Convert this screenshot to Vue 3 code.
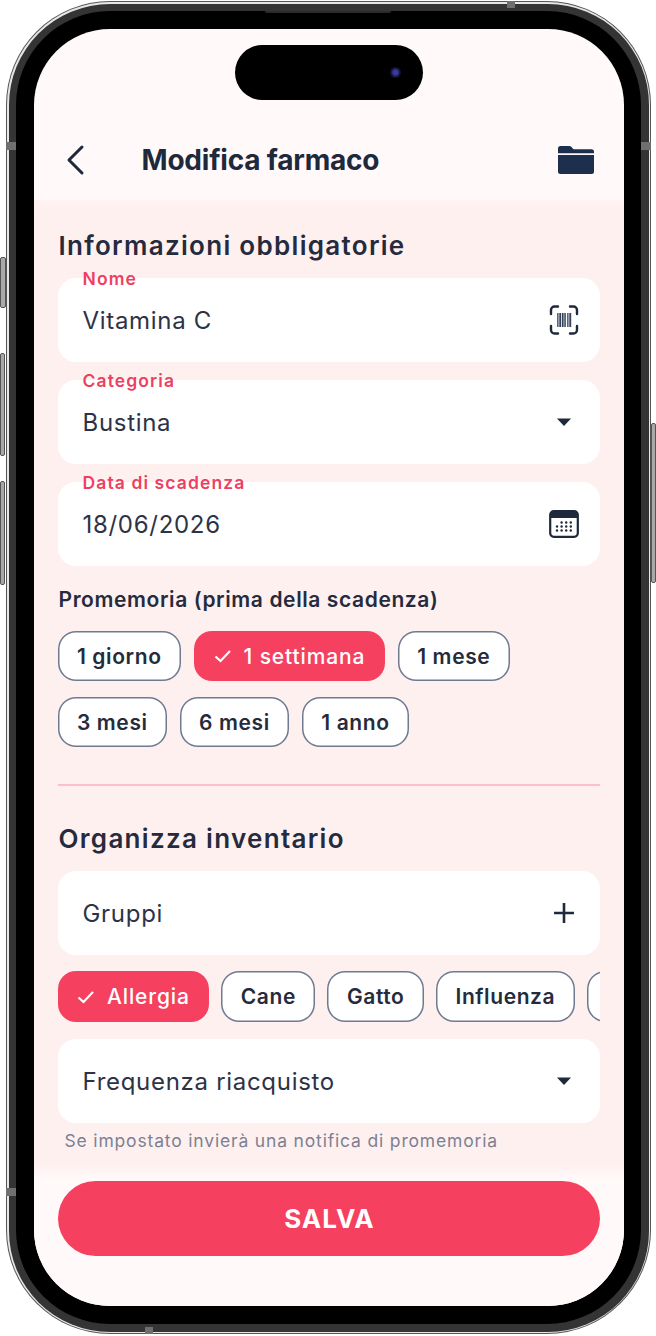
<script setup>
const reminders = [
  [{ t: '1 giorno' }, { t: '1 settimana', on: true }, { t: '1 mese' }],
  [{ t: '3 mesi' }, { t: '6 mesi' }, { t: '1 anno' }],
]
const groups = [{ t: 'Allergia', on: true }, { t: 'Cane' }, { t: 'Gatto' }, { t: 'Influenza' }]
const bars = [0, 1.5, 3, 5, 6.5, 8, 10, 11.5, 13]
const dots = []
for (let y = 0; y < 3; y++) for (let x = 0; x < 4; x++) if (!(y === 0 && x === 0)) dots.push([8 + x * 4.6, 13.5 + y * 4])
</script>

<template>
  <div class="stage">
    <div class="phone">
      <i class="btn b1"></i><i class="btn b2"></i><i class="btn b3"></i><i class="btn b4"></i>
      <i class="band bl1"></i><i class="band bl2"></i><i class="band br1"></i><i class="band bt"></i><i class="band bb"></i>
      <div class="rim">
        <div class="steel">
          <div class="metal">
            <div class="bezel">
              <div class="speaker"></div>
              <div class="screen">
                <div class="island"><span class="camera"></span></div>
                <header class="top">
                  <svg class="back" width="22" height="32" viewBox="0 0 22 32"><path d="M18 3 5 16l13 13" fill="none" stroke="#1e293b" stroke-width="3" stroke-linecap="round" stroke-linejoin="round"/></svg>
                  <h1>Modifica farmaco</h1>
                  <svg class="folder" width="36" height="30" viewBox="0 0 36 30"><path d="M0 3.500A2.500 2.500 0 0 1 2.500 1h8.800c.9 0 1.600.4 2.200 1l2 2.200h18A2.500 2.500 0 0 1 36 6.700v1.500H0z" fill="#1e2f4d"/><path d="M0 10h36v16.500a2.500 2.500 0 0 1-2.500 2.500h-31A2.500 2.500 0 0 1 0 26.500z" fill="#1e2f4d"/></svg>
                </header>
                <main class="body">
                  <h2 class="first">Informazioni obbligatorie</h2>
                  <div class="stack">
                    <div class="field">
                      <label>Nome</label><span>Vitamina C</span>
                      <svg width="30" height="30" viewBox="0 0 30 30" fill="none"><path d="M2 9V5a3.500 3.500 0 0 1 3.500-3.500H9M21 1.500h3.500A3.500 3.500 0 0 1 28 5v4M28 21v4a3.500 3.500 0 0 1-3.500 3.500H21M9 28.500H5.500A3.500 3.500 0 0 1 2 25v-4" stroke="#1e293b" stroke-width="2.400" stroke-linecap="round"/><rect v-for="b in bars" :key="b" :x="8 + b" y="8" :width="b % 2 ? 1.2 : 0.8" height="14" fill="#33415a"/></svg>
                    </div>
                    <div class="field">
                      <label>Categoria</label><span>Bustina</span>
                      <svg width="30" height="30" viewBox="0 0 30 30"><path d="M8 11.500h14l-7 7.500z" fill="#1e293b"/></svg>
                    </div>
                    <div class="field">
                      <label>Data di scadenza</label><span>18/06/2026</span>
                      <svg width="30" height="30" viewBox="0 0 30 30"><rect x="1.200" y="2.200" width="27.600" height="25.600" rx="3.500" fill="#fff" stroke="#1e293b" stroke-width="2.200"/><path d="M1.200 9V5.500a3.300 3.300 0 0 1 3.300-3.300h21a3.300 3.300 0 0 1 3.300 3.300V9z" fill="#1e293b"/><circle v-for="d in dots" :key="d.join()" :cx="d[0]" :cy="d[1]" r="1.200" fill="#1e293b"/></svg>
                    </div>
                  </div>
                  <h3>Promemoria (prima della scadenza)</h3>
                  <div class="rows">
                    <div v-for="(row, i) in reminders" :key="i" class="chips">
                      <div v-for="c in row" :key="c.t" class="chip" :class="{ on: c.on }">
                        <svg v-if="c.on" width="18" height="14" viewBox="0 0 18 14"><path d="M1.500 7.500 6.500 12 16 2" fill="none" stroke="#fff" stroke-width="2.200"/></svg>
                        {{ c.t }}
                      </div>
                    </div>
                  </div>
                  <hr />
                  <h2 class="second">Organizza inventario</h2>
                  <div class="field">
                    <span>Gruppi</span>
                    <svg width="30" height="30" viewBox="0 0 30 30"><path d="M15 5v20M5 15h20" stroke="#1e293b" stroke-width="2.600" fill="none"/></svg>
                  </div>
                  <div class="chips scroller">
                    <div v-for="c in groups" :key="c.t" class="chip" :class="{ on: c.on }">
                      <svg v-if="c.on" width="18" height="14" viewBox="0 0 18 14"><path d="M1.500 7.500 6.500 12 16 2" fill="none" stroke="#fff" stroke-width="2.200"/></svg>
                      {{ c.t }}
                    </div>
                    <div class="chip blank"></div>
                  </div>
                  <div class="field">
                    <span>Frequenza riacquisto</span>
                    <svg width="30" height="30" viewBox="0 0 30 30"><path d="M8 11.500h14l-7 7.500z" fill="#1e293b"/></svg>
                  </div>
                  <p class="hint">Se impostato invierà una notifica di promemoria</p>
                </main>
                <footer class="foot"><button>SALVA</button></footer>
              </div>
            </div>
          </div>
        </div>
      </div>
    </div>
  </div>
</template>

<style>
html, body { margin: 0; background: #fff; }
</style>

<style scoped>
.stage { width: 656px; height: 1336px; padding: 1px 5px 2px 6px; box-sizing: border-box; font-family: Inter, "Liberation Sans", sans-serif; overflow: hidden; }
.phone { position: relative; height: 100%; }
.rim { height: 100%; box-sizing: border-box; padding: 1px; border-radius: 104px; background: #555; position: relative; }
.steel { height: 100%; box-sizing: border-box; padding: 1.500px; border-radius: 103px; background: #e6e6e6; }
.metal { height: 100%; box-sizing: border-box; padding: 7.500px; border-radius: 101px; background: #343434; }
.bezel { position: relative; height: 100%; box-sizing: border-box; padding: 18px 17.500px 18px 17.500px; border-radius: 94px; background: #000; }
.speaker { position: absolute; left: 249px; right: 250px; top: 0; height: 2px; background: #2b2b2b; border-radius: 0 0 3px 3px; }
.screen { position: relative; height: 100%; border-radius: 76px; overflow: hidden; background: #fff9fa; display: flex; flex-direction: column; }
.island { position: absolute; left: 201.500px; top: 16px; width: 188px; height: 55px; border-radius: 28px; background: #000; }
.camera { position: absolute; right: 22px; top: 22px; width: 11px; height: 11px; border-radius: 50%; background: radial-gradient(circle, #3a3a9a 0 30%, #14143f 55%, #08081a 100%); }
.btn { position: absolute; background: #a9a9a9; border: 1px solid #555; border-radius: 2px; box-sizing: border-box; }
.b1 { left: -6px; top: 256px; width: 6px; height: 51px; }
.b2 { left: -6px; top: 352px; width: 5px; height: 103px; }
.b3 { left: -6px; top: 480px; width: 5px; height: 104px; }
.b4 { right: -5px; top: 422px; width: 5px; height: 160px; }
.band { position: absolute; background: #6f6f6f; z-index: 2; }
.bl1 { left: 0; top: 141px; width: 10px; height: 8px; }
.bl2 { left: 0; top: 1187px; width: 10px; height: 8px; }
.br1 { right: 0; top: 141px; width: 10px; height: 8px; }
.bt { left: 501px; top: 0; width: 8px; height: 7px; }
.bb { left: 139px; bottom: 0; width: 8px; height: 7px; }
.top { flex: none; height: 171px; box-sizing: border-box; padding: 116px 30px 0 30px; display: flex; align-items: flex-start; }
.back { flex: none; margin-top: -1px; }
.top h1 { margin: 0 0 0 56px; flex: 1; font-size: 28px; line-height: 30px; font-weight: 700; letter-spacing: -0.2px; color: #1e293b; }
.folder { flex: none; margin-top: 0; }
.body { flex: 1; min-height: 0; overflow: hidden; padding: 0 24px; background: linear-gradient(#fff2f1, #fff0f0 12px); }
h2 { margin: 0; padding-left: 1px; font-size: 26px; line-height: 32px; font-weight: 600; letter-spacing: 1.3px; color: #252b3d; }
.first { padding-top: 30px; margin-bottom: 16px; }
.second { padding-top: 37px; margin-bottom: 16px; }
.stack { display: flex; flex-direction: column; gap: 18px; }
.field { position: relative; height: 84px; box-sizing: border-box; padding: 0 21px 0 25px; border-radius: 18px; background: #fff; display: flex; align-items: center; justify-content: space-between; font-size: 24px; letter-spacing: 0.7px; color: #2d3345; }
.field label { position: absolute; left: 25px; top: -10px; font-size: 17.500px; line-height: 22px; font-weight: 600; letter-spacing: 1.1px; color: #ee3f62; }
h3 { margin: 22px 0 19px; padding-left: 1px; font-size: 21px; line-height: 24px; font-weight: 600; letter-spacing: 0.6px; color: #252b3d; }
.rows { display: flex; flex-direction: column; gap: 16px; }
.chips { display: flex; gap: 12.500px; }
.chip { flex: none; height: 50px; box-sizing: border-box; padding: 0 19.500px; box-shadow: inset 0 0 0 1.500px #6f7a90; border-radius: 18px; background: #fff; display: flex; align-items: center; gap: 12px; font-size: 21px; font-weight: 600; letter-spacing: 0.6px; color: #252b3d; white-space: nowrap; }
.chip.on { padding: 0 20px; box-shadow: none; background: #f6405f; color: #fff; font-weight: 500; letter-spacing: 0.87px; }
.chip.blank { width: 60px; }
hr { margin: 37px 0 0; height: 2px; border: 0; background: #fdc0cb; }
.scroller { margin: 16px 0 17px; gap: 12px; overflow: hidden; }
.scroller .chip { height: 51px; }
.scroller .chip.on { padding: 0 19.500px; }
.hint { margin: 7px 0 0 7px; font-size: 17.500px; line-height: 22px; letter-spacing: 0.83px; color: #7c8192; }
.foot { flex: none; height: 141px; box-sizing: border-box; padding: 16px 24px 0; background: linear-gradient(#fff0f0, #fff9fa 14px); }
.foot button { display: block; width: 100%; height: 75px; padding: 0 0 0 2px; border: 0; border-radius: 38px; background: #f6405f; color: #fff; font: 700 26px Inter, "Liberation Sans", sans-serif; letter-spacing: 1px; }
</style>
